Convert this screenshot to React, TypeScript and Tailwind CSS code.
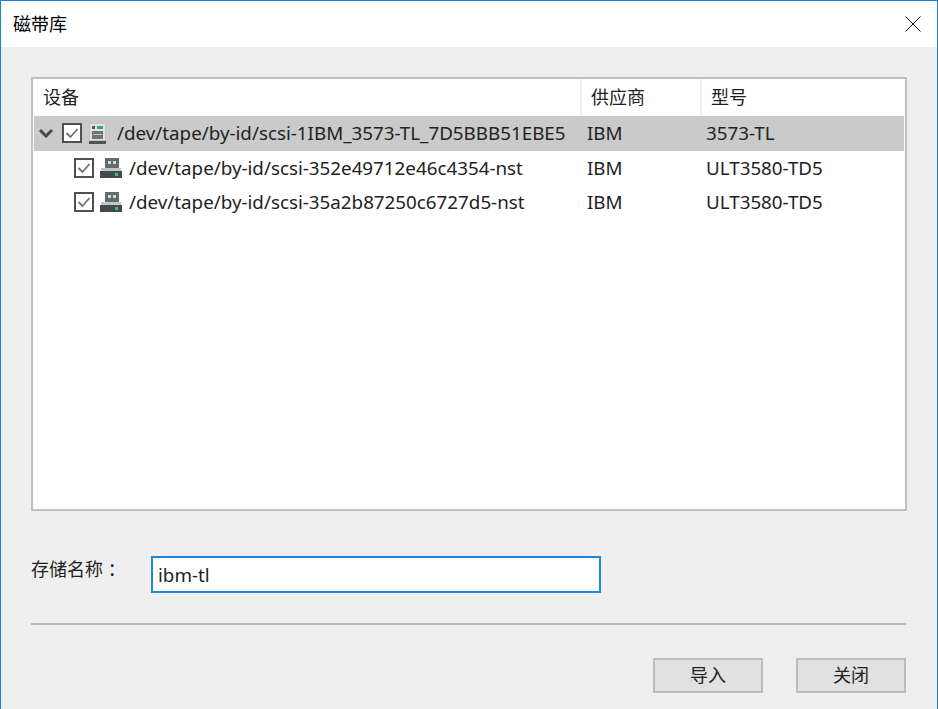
import React from 'react';

const font = "font-['Noto_Sans','Noto_Sans_CJK_SC',sans-serif]";

const rows = [
  { path: '/dev/tape/by-id/scsi-1IBM_3573-TL_7D5BBB51EBE5', vendor: 'IBM', model: '3573-TL', parent: true },
  { path: '/dev/tape/by-id/scsi-352e49712e46c4354-nst', vendor: 'IBM', model: 'ULT3580-TD5', parent: false },
  { path: '/dev/tape/by-id/scsi-35a2b87250c6727d5-nst', vendor: 'IBM', model: 'ULT3580-TD5', parent: false },
];

const CheckBox = () => (
  <svg width="20" height="20" viewBox="0 0 20 20" className="shrink-0">
    <rect x="1" y="1" width="18" height="18" fill="#fff" stroke="#505050" strokeWidth="2" />
    <path d="M4.5 10 L8.5 14 L15.5 6" fill="none" stroke="#707070" strokeWidth="1.8" />
  </svg>
);

const Chevron = () => (
  <svg width="16" height="10" viewBox="0 0 16 10" className="shrink-0">
    <path d="M2 2 L8 8 L14 2" fill="none" stroke="#4a4a4a" strokeWidth="3" />
  </svg>
);

const LibraryIcon = () => (
  <svg width="17" height="21" viewBox="0 0 17 21" className="shrink-0">
    <rect x="0.5" y="0.5" width="16" height="17" fill="#e2e2e2" stroke="#c4c4c4" />
    <rect x="3" y="3" width="3" height="3" fill="#4d5656" />
    <rect x="8" y="3" width="6" height="3" fill="#2fae5f" />
    <rect x="3" y="8" width="11" height="8" fill="#6d7575" />
    <rect x="4" y="11" width="9" height="1" fill="#c2c6c6" />
    <rect x="0" y="18" width="17" height="3" fill="#4d5454" />
  </svg>
);

const DriveIcon = () => (
  <svg width="22" height="20" viewBox="0 0 22 20" className="shrink-0">
    <rect x="5" y="0" width="14" height="10" fill="#616c70" />
    <rect x="8" y="3" width="3" height="3" fill="#d5dada" />
    <rect x="13" y="3" width="3" height="3" fill="#d5dada" />
    <rect x="1" y="10" width="20" height="3" fill="#c3c6c6" />
    <rect x="0" y="13" width="22" height="7" fill="#434b4d" />
    <rect x="15" y="15" width="3" height="3" fill="#3fc46a" />
  </svg>
);

const CloseIcon = () => (
  <svg width="16" height="16" viewBox="0 0 16 16" className="shrink-0">
    <path d="M0.5 0.5 L15.5 15.5 M15.5 0.5 L0.5 15.5" stroke="#111" strokeWidth="1" fill="none" />
  </svg>
);

const HeaderCell = ({ label, className }: { label: string; className: string }) => (
  <div className={`flex items-center border-r-2 border-[#f0f0f0] ${className}`}>{label}</div>
);

const DialogButton = ({ label }: { label: string }) => (
  <button className="w-[110px] h-[35px] border-2 border-[#bcbcbc] bg-[#e1e1e1] text-[18px] text-[#222]">{label}</button>
);

export default function App() {
  return (
    <div className={`${font} w-[938px] h-[709px] flex flex-col border-x border-t border-[#1883d7] bg-[#efefef] text-[#222] overflow-hidden`}>
      {/* Title bar */}
      <div className="h-[46px] shrink-0 bg-white flex items-center justify-between pl-[12px] pr-[16px]">
        <span className="text-[18px] text-black">磁带库</span>
        <CloseIcon />
      </div>

      <div className="flex-1 flex flex-col pl-[30px] pr-[30px] pt-[30px]">
        {/* Device tree */}
        <div className="h-[434px] w-[876px] border-2 border-[#c0c0c5] bg-white px-px flex flex-col">
          <div className="h-[37px] shrink-0 flex pr-[2px] text-[18px]">
            <HeaderCell label="设备" className="w-[548px] pl-[9px]" />
            <HeaderCell label="供应商" className="w-[120px] pl-[9px]" />
            <div className="flex-1 flex items-center pl-[9px]">型号</div>
          </div>
          {rows.map((row) => (
            <div
              key={row.path}
              className={`h-[34.5px] shrink-0 flex items-center whitespace-nowrap text-[18.8px] ${row.parent ? 'bg-[#cacaca]' : ''}`}
            >
              <div className={`w-[546px] flex items-center ${row.parent ? 'pl-[4px]' : 'pl-[40px]'}`}>
                {row.parent && (
                  <span className="w-[24px] shrink-0">
                    <Chevron />
                  </span>
                )}
                <CheckBox />
                {row.parent ? (
                  <span className="ml-[7px] mr-[11px] flex"><LibraryIcon /></span>
                ) : (
                  <span className="ml-[6px] mr-[7px] flex"><DriveIcon /></span>
                )}
                <span>{row.path}</span>
              </div>
              <div className="w-[120px] pl-[7px]">{row.vendor}</div>
              <div className="pl-[6px]">{row.model}</div>
            </div>
          ))}
        </div>

        {/* Name field */}
        <div className="flex items-center mt-[45px] h-[37px]">
          <span className="w-[120px] -mt-[10px] text-[18px] whitespace-pre">存储名称 ：</span>
          <input
            readOnly
            value="ibm-tl"
            className="w-[450px] h-[37px] border-2 border-[#1e87dc] bg-white px-[5px] text-[18.8px] text-[#222] outline-none"
          />
        </div>

        <div className="mt-[30px] h-[2px] w-[875px] bg-[#b9b9b9]" />

        {/* Actions */}
        <div className="mt-[33px] w-[875px] flex justify-end gap-[33px]">
          <DialogButton label="导入" />
          <DialogButton label="关闭" />
        </div>
      </div>
    </div>
  );
}
